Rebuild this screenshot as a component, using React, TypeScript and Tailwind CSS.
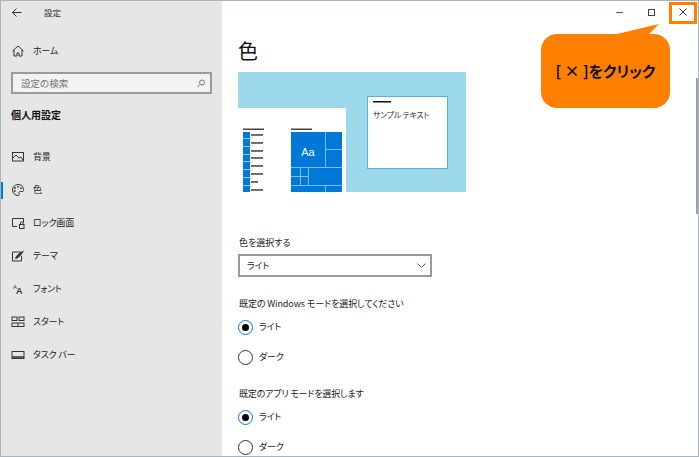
import React from "react";

const S = { fill: "none", stroke: "#333", strokeWidth: 1 } as const;
const Ico = ({ children }: { children: React.ReactNode }) => (
  <svg width="14" height="14" viewBox="0 0 14 14" className="shrink-0">{children}</svg>
);

const items: [string, React.ReactNode, boolean?][] = [
  ["背景", <Ico><rect x="1.500" y="2.500" width="11" height="8.500" {...S} /><path d="M2 8l3-3 3 3 2-1 2 3" {...S} /></Ico>],
  ["色", <Ico><path d="M7 1.500a5.500 5.500 0 1 0 0 11c1.500 0 1.500-1 1-2s0-2 1.500-2h2c1 0 1-1 1-2C12.500 3.500 10 1.500 7 1.500z" {...S} /><circle cx="4" cy="5" r=".9" fill="#333" /><circle cx="7" cy="3.800" r=".9" fill="#333" /><circle cx="3.800" cy="8" r=".9" fill="#333" /><circle cx="10" cy="5.200" r=".9" fill="#333" /></Ico>, true],
  ["ロック画面", <Ico><path d="M6 10.500H1.500v-8h11v4" {...S} /><rect x="8.500" y="8.500" width="4.500" height="4" {...S} /><path d="M9.500 8.500V7a1.200 1.200 0 0 1 2.500 0v1.500" {...S} /></Ico>],
  ["テーマ", <Ico><path d="M10 3H1.500v9h9V7" {...S} /><path d="M4 9.500C5 6.500 9 3 13 1.500 11.500 5 8 9 5 10z" fill="#333" /></Ico>],
  ["フォント", <Ico><text x="2" y="7" fontSize="6" fontFamily="Liberation Sans" fill="#333">A</text><text x="5" y="11.500" fontSize="9" fontWeight="700" fontFamily="Liberation Sans" fill="#333">A</text></Ico>],
  ["スタート", <Ico><rect x="1" y="2" width="5" height="3.500" {...S} /><rect x="8" y="2" width="5" height="3.500" {...S} /><rect x="1" y="8" width="12" height="3.500" {...S} /><path d="M7 8v3.500" {...S} /></Ico>],
  ["タスク バー", <Ico><rect x="1" y="3.500" width="12" height="7" {...S} /><path d="M1 9h12" {...S} strokeWidth={1.500} /></Ico>],
];

const Radio = ({ on, label }: { on?: boolean; label: string }) => (
  <div className="flex items-center h-[14px] gap-[6px]">
    <span className={`w-[15px] h-[15px] rounded-full flex items-center justify-center border-[1.5px] ${on ? "border-[#0a78d7]" : "border-[#333]"}`}>
      {on && <span className="w-[7px] h-[7px] rounded-full bg-black" />}
    </span>
    <span className="text-[9px] leading-[14px] text-[#222] tracking-[-0.2px]">{label}</span>
  </div>
);

const Label = ({ children, className = "" }: { children: React.ReactNode; className?: string }) => (
  <div className={`ml-[1px] text-[9px] leading-[14px] text-[#222] ${className}`}>{children}</div>
);

const Preview = () => (
  <svg width="228" height="120" viewBox="0 0 228 120" className="block">
    <rect width="228" height="120" fill="#9bd9ea" />
    <rect x="0" y="36" width="108" height="84" fill="#fff" />
    <rect x="5" y="56.500" width="21" height="1.500" fill="#444" />
    <rect x="5" y="60" width="7" height="60" fill="#0078d7" />
    {[63, 71, 79, 86, 94, 102, 110, 118].map((y, i) => (
      <g key={y}>
        <rect x="13" y={y - 0.700} width={i === 6 ? 7 : 12} height="1.300" fill="#222" />
        <rect x="5" y={y + 3} width="7" height="1" fill="#8ec6ef" />
      </g>
    ))}
    <rect x="53" y="56.500" width="21" height="1.500" fill="#444" />
    <rect x="53" y="60" width="51" height="60" fill="#0078d7" />
    <path d="M87.500 60v35M53 95.500h51M87.500 77.500h17M62.500 95v19M70.500 95v19M53 104.500h17M53 113.500h51M87.500 114v6" stroke="#7fbdec" strokeWidth="1" fill="none" />
    <text x="70" y="84" textAnchor="middle" fontSize="11" fill="#fff" fontFamily="Liberation Sans">Aa</text>
    <rect x="129.500" y="24.500" width="80" height="72" fill="#fff" stroke="#5cace8" />
    <rect x="135" y="29" width="18" height="1.500" fill="#111" />
    <text x="135" y="46" fontSize="8" letterSpacing="-0.3" fill="#333" style={{ fontFeatureSettings: '"palt"' }}>サンプル テキスト</text>
  </svg>
);

export default function App() {
  return (
    <div className="relative w-[699px] h-[457px] overflow-hidden flex bg-white border border-[#a9b5bd] [font-family:'Noto_Sans_CJK_JP','Noto_Sans',sans-serif] [font-feature-settings:'palt']">
      <aside className="w-[221px] shrink-0 bg-[#e6e6e6] flex flex-col">
        <div className="flex items-center h-[22px] pl-[11px]">
          <svg width="10" height="9" viewBox="0 0 10 9"><path d="M4.500.500l-4 4 4 4M.5 4.500h9" fill="none" stroke="#333" /></svg>
          <span className="ml-[22px] text-[8.500px] text-[#333]">設定</span>
        </div>
        <div className="flex items-center h-[14px] mt-[21px] pl-[10px] gap-[8px] text-[9px] text-[#222]">
          <Ico><path d="M1.500 7L7 2l5.500 5M3 6v6h3V9h2v3h3V6" {...S} /></Ico>
          <span className="tracking-[-0.3px]">ホーム</span>
        </div>
        <div className="ml-[10px] mt-[14px] h-[22px] w-[201px] border-2 border-[#9a9a9a] bg-[#f2f2f2] flex items-center justify-between pl-[8px] pr-[5px] text-[9.500px] text-[#777]">
          <span>設定の検索</span>
          <svg width="8" height="9" viewBox="0 0 8 9"><circle cx="5" cy="3.500" r="2.500" fill="none" stroke="#777" /><path d="M3.200 5.300L.5 8" stroke="#777" /></svg>
        </div>
        <div className="ml-[10px] mt-[14px] h-[14px] text-[10px] leading-[14px] font-bold text-[#111]">個人用設定</div>
        <nav className="mt-[28px] flex flex-col gap-[19px]">
          {items.map(([t, ic, active]) => (
            <div key={t} className="relative flex items-center h-[14px] pl-[10px] gap-[8px] text-[9px] text-[#222]">
              {active && <span className="absolute left-0 top-[-1px] w-[2px] h-[17px] bg-[#0078d7]" />}
              {ic}
              <span className="whitespace-pre tracking-[-0.2px]">{t}</span>
            </div>
          ))}
        </nav>
      </aside>

      <main className="flex-1 flex flex-col overflow-hidden">
        <div className="flex justify-end h-[22px] shrink-0 -mr-[1px]">
          <div className="w-[32px] flex items-center justify-center"><span className="w-[7px] h-[1px] bg-[#555]" /></div>
          <div className="w-[32px] flex items-center justify-center"><span className="w-[7px] h-[7px] border border-[#444]" /></div>
          <div className="w-[32px] flex items-center justify-center">
            <svg width="8" height="8" viewBox="0 0 8 8"><path d="M.5.500l7 7M7.500.500l-7 7" stroke="#333" /></svg>
          </div>
        </div>
        <div className="pl-[16px]">
          <h1 className="mt-[13px] h-[30px] text-[20px] leading-[30px] font-normal text-[#111]">色</h1>
          <div className="mt-[6px]"><Preview /></div>
          <Label className="mt-[44px]">色を選択する</Label>
          <div className="mt-[4px] w-[194px] h-[23px] border-2 border-[#999] flex items-center justify-between pl-[7px] pr-[4px] text-[9px] text-[#222]">
            <span className="tracking-[-0.2px]">ライト</span>
            <svg width="9" height="5" viewBox="0 0 9 5"><path d="M.5.500l4 4 4-4" fill="none" stroke="#555" /></svg>
          </div>
          <Label className="mt-[20px] tracking-[-0.1px]">既定の Windows モードを選択してください</Label>
          <div className="mt-[9px] flex flex-col gap-[16px]">
            <Radio on label="ライト" />
            <Radio label="ダーク" />
          </div>
          <Label className="mt-[23px] tracking-[-0.2px]">既定のアプリ モードを選択します</Label>
          <div className="mt-[9px] flex flex-col gap-[16px]">
            <Radio on label="ライト" />
            <Radio label="ダーク" />
          </div>
        </div>
      </main>

      <div className="absolute right-0 top-[77px] w-[2px] h-[136px] bg-[#a0a0a0]" />
      <div className="absolute right-[1px] top-[1px] w-[28px] h-[22px] border-[3px] border-[#ff8000]" />
      <svg className="absolute left-[616px] top-[22px]" width="45" height="15" viewBox="0 0 45 15">
        <path d="M0 11L42 1 32 11v4H0z" fill="#ff8000" />
      </svg>
      <div className="absolute left-[540px] top-[33px] w-[129px] h-[74px] rounded-[16px] bg-[#ff8000] flex items-center justify-center text-[15px] font-bold text-[#111]">
        [ × ]をクリック
      </div>
    </div>
  );
}
